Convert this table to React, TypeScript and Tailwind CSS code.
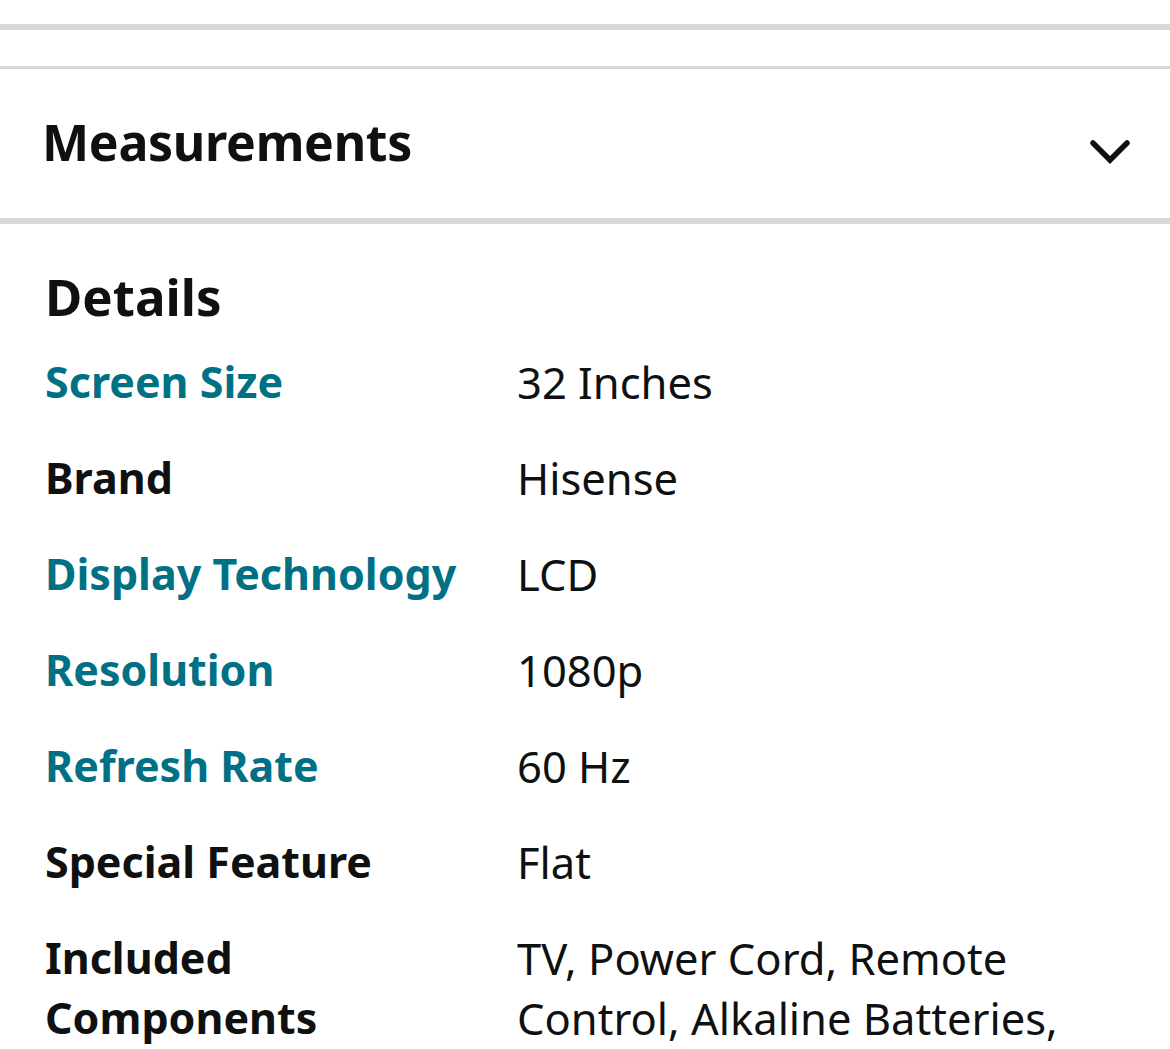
const details: { label: string; value: string; link?: boolean }[] = [
  { label: "Screen Size", value: "32 Inches", link: true },
  { label: "Brand", value: "Hisense" },
  { label: "Display Technology", value: "LCD", link: true },
  { label: "Resolution", value: "1080p", link: true },
  { label: "Refresh Rate", value: "60 Hz", link: true },
  { label: "Special Feature", value: "Flat" },
  {
    label: "Included Components",
    value: "TV, Power Cord, Remote Control, Alkaline Batteries, Quick Start Guide",
  },
];

function Chevron() {
  return (
    <svg width="44" height="28" viewBox="0 0 44 28" fill="none" className="mt-[20px]">
      <path
        d="M5 5 L22 22 L39 5"
        stroke="#0f1111"
        strokeWidth="5.5"
        strokeLinecap="round"
        strokeLinejoin="miter"
      />
    </svg>
  );
}

export default function App() {
  return (
    <div
      className="w-[1170px] h-[1049px] overflow-hidden bg-white text-[#0f1111]"
      style={{ fontFamily: '"Noto Sans", "Open Sans", sans-serif' }}
    >
      <div className="h-[24px]" />
      <div className="h-[6px] bg-[#d5d9d9]" />
      <div className="h-[36px]" />
      <div className="h-[3px] bg-[#d5d9d9]" />

      <div className="h-[149px] flex items-center justify-between pl-[42px] pr-[38px] pb-[4px]">
        <h2 className="text-[50px] leading-none font-bold tracking-[-0.3px]">Measurements</h2>
        <Chevron />
      </div>
      <div className="h-[6px] bg-[#d5d9d9]" />

      <div className="pl-[45px] pr-[45px] pt-[40px]">
        <h2 className="text-[51px] leading-[64px] font-bold mb-[24px]">Details</h2>
        <div className="flex flex-col gap-[36px]">
          {details.map((d) => (
            <div key={d.label} className="grid grid-cols-[472px_1fr] leading-[60px]">
              <div
                className={
                  d.link
                    ? "text-[43px] font-bold text-[#007185] pr-[16px]"
                    : "text-[43px] font-bold pr-[16px]"
                }
              >
                {d.label}
              </div>
              <div className="text-[43.5px]">{d.value}</div>
            </div>
          ))}
        </div>
      </div>
    </div>
  );
}
